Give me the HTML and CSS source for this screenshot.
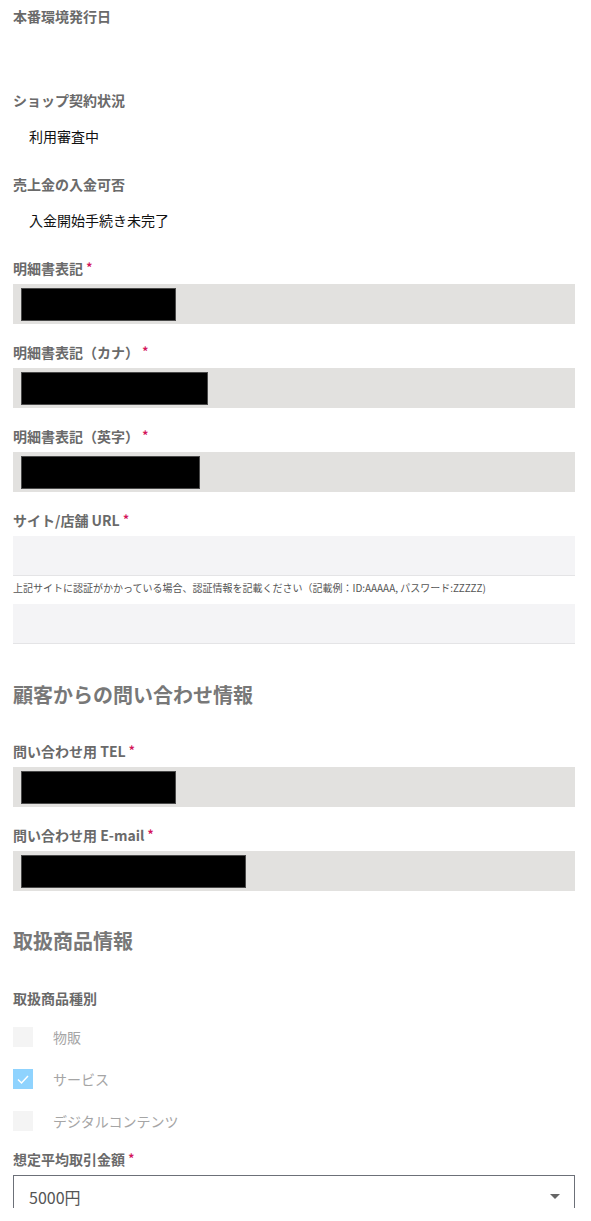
FILE: index.html
```html
<!DOCTYPE html>
<html lang="ja">
<head>
<meta charset="utf-8">
<link rel="stylesheet" href="styles.css">
</head>
<body>
<div class="form">
  <div class="field text-field">
    <div class="label">本番環境発行日</div>
    <div class="value"></div>
  </div>
  <div class="field text-field">
    <div class="label">ショップ契約状況</div>
    <div class="value">利用審査中</div>
  </div>
  <div class="field text-field">
    <div class="label">売上金の入金可否</div>
    <div class="value">入金開始手続き未完了</div>
  </div>

  <div class="field">
    <div class="label">明細書表記 <span class="req">*</span></div>
    <div class="input disabled"><span class="redact" style="width:155px"></span></div>
  </div>
  <div class="field">
    <div class="label">明細書表記（カナ） <span class="req">*</span></div>
    <div class="input disabled"><span class="redact" style="width:187px"></span></div>
  </div>
  <div class="field">
    <div class="label">明細書表記（英字） <span class="req">*</span></div>
    <div class="input disabled"><span class="redact" style="width:179px"></span></div>
  </div>
  <div class="field url-field">
    <div class="label">サイト/店舗 URL <span class="req">*</span></div>
    <div class="input light"></div>
    <div class="note">上記サイトに認証がかかっている場合、認証情報を記載ください（記載例：ID:AAAAA, パスワード:ZZZZZ)</div>
    <div class="input light"></div>
  </div>

  <h2 class="section first">顧客からの問い合わせ情報</h2>
  <div class="field">
    <div class="label">問い合わせ用 TEL <span class="req">*</span></div>
    <div class="input disabled"><span class="redact" style="width:155px"></span></div>
  </div>
  <div class="field">
    <div class="label">問い合わせ用 E-mail <span class="req">*</span></div>
    <div class="input disabled"><span class="redact wide" style="width:225px"></span></div>
  </div>

  <h2 class="section second">取扱商品情報</h2>
  <div class="field checks">
    <div class="label">取扱商品種別</div>
    <div class="check-list">
      <div class="check-row"><span class="box"></span><span class="check-label">物販</span></div>
      <div class="check-row"><span class="box on"><svg viewBox="0 0 20 20" width="20" height="20"><polyline points="5,10.5 8.5,14 15,7" fill="none" stroke="#fff" stroke-width="1.5"/></svg></span><span class="check-label">サービス</span></div>
      <div class="check-row"><span class="box"></span><span class="check-label">デジタルコンテンツ</span></div>
    </div>
  </div>
  <div class="field">
    <div class="label">想定平均取引金額 <span class="req">*</span></div>
    <div class="select"><span class="select-text">5000円</span><span class="arrow"></span></div>
  </div>
</div>
</body>
</html>
```
FILE: styles.css
```css
* { box-sizing: border-box; }
html, body { margin: 0; padding: 0; background: #fff; }
body {
  font-family: "Noto Sans CJK JP", "Noto Sans", sans-serif;
  color: #333;
  overflow: hidden;
}
.form {
  padding: 6px 16px 0 13px;
}
.field { margin-bottom: 18px; }
.label {
  font-size: 14px;
  line-height: 20px;
  height: 20px;
  font-weight: 700;
  color: #6a6a6a;
  margin-bottom: 6px;
  white-space: nowrap;
}
.req {
  color: #d4145a;
  font-size: 12px;
  line-height: 0;
  vertical-align: 2px;
}
.text-field { margin-bottom: 28px; }
.text-field .label { margin-bottom: 16px; }
.value {
  font-size: 14px;
  line-height: 20px;
  min-height: 20px;
  color: #111;
  padding-left: 16px;
}
.input {
  height: 40px;
  display: flex;
  align-items: center;
  padding-left: 8px;
}
.input.disabled { background: #e2e1df; }
.input.light {
  background: #f4f4f6;
  border-bottom: 1px solid #e4e4e6;
}
.redact {
  display: block;
  height: 33px;
  background: #000;
  border: 1px solid #4a4a4a;
}
.note {
  font-size: 10px;
  line-height: 16px;
  height: 16px;
  color: #555;
  margin: 4px 0 8px;
  white-space: nowrap;
}
.section {
  margin: 0;
  font-size: 20px;
  line-height: 28px;
  height: 28px;
  font-weight: 700;
  color: #787878;
}
.section.first { margin-top: 37px; margin-bottom: 32px; }
.section.second { margin-top: 36px; margin-bottom: 33px; }
.checks .label { margin-bottom: 19px; }
.check-list {
  display: flex;
  flex-direction: column;
  gap: 22px;
}
.check-row {
  display: flex;
  align-items: center;
  gap: 20px;
  height: 20px;
}
.box {
  width: 20px;
  height: 20px;
  background: #f4f4f4;
  display: block;
}
.box.on { background: #8fd3fe; }
.box svg { display: block; }
.check-label {
  font-size: 14px;
  color: #a5a5a5;
  line-height: 20px;
}
.select {
  height: 33px;
  border: 1px solid #6c7078;
  border-bottom: none;
  display: flex;
  align-items: flex-start;
  justify-content: space-between;
  padding: 10px 14px 0 15px;
}
.select-text {
  font-size: 16px;
  color: #555;
  line-height: 22px;
}
.arrow {
  width: 0;
  height: 0;
  border-left: 5px solid transparent;
  border-right: 5px solid transparent;
  border-top: 5px solid #666;
  margin-top: 8px;
}
```
